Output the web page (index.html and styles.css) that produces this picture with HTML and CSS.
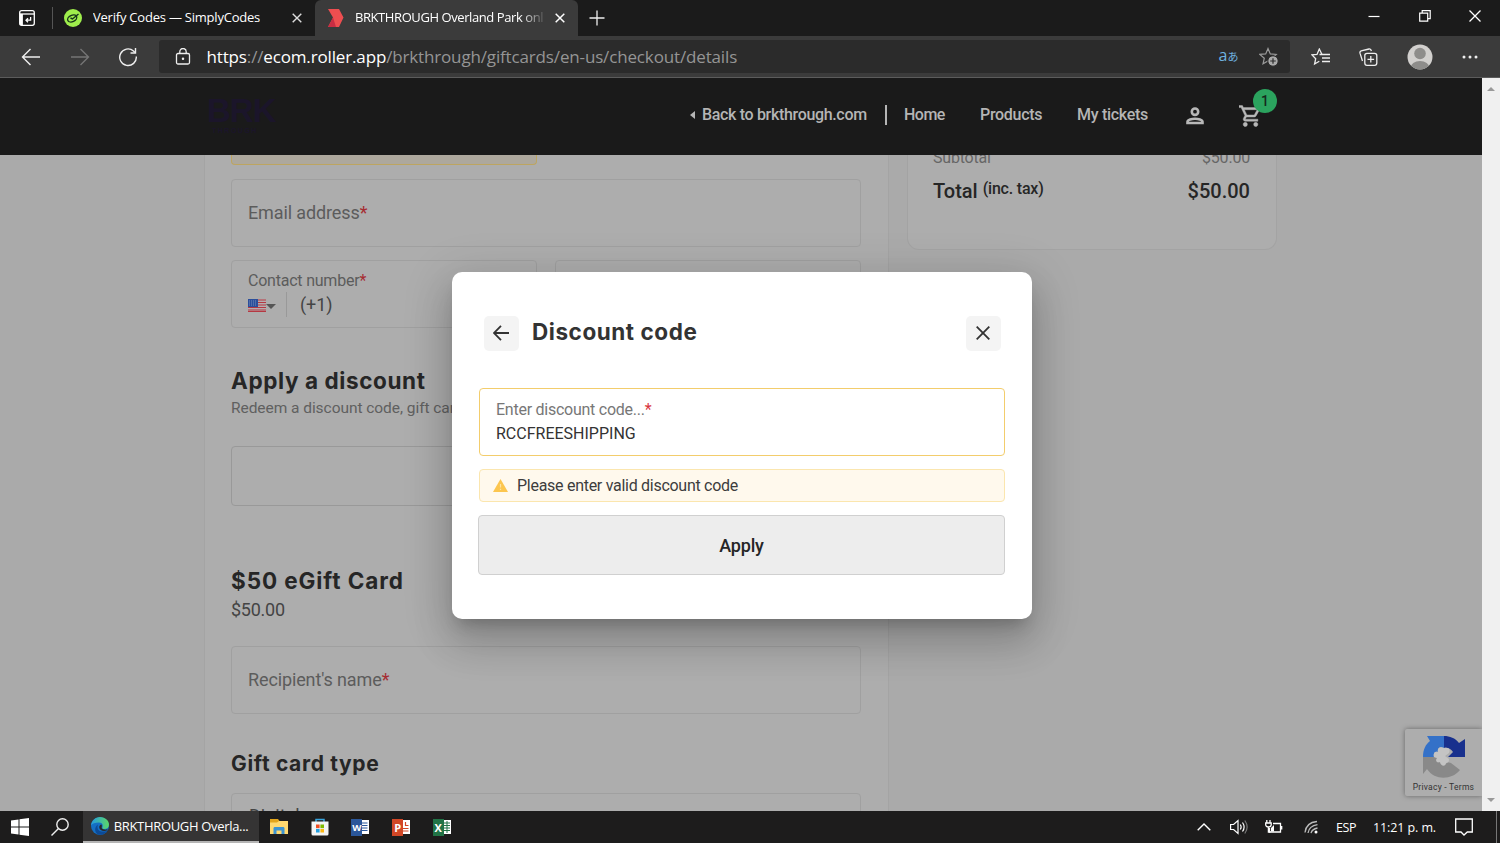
FILE: index.html
```html
<!DOCTYPE html>
<html lang="en">
<head>
    <meta charset="UTF-8">
    <meta name="viewport" content="width=device-width, initial-scale=1.0">
    <title>BRKTHROUGH Overland Park</title>
    <link rel="stylesheet" href="styles.css">
</head>
<body>
    <!-- Tabs -->
    <div class="tab-bar">
        <div class="tab-actions">
            <svg width="18" height="18" viewBox="0 0 18 18" fill="none" stroke="#fff" stroke-width="1.3"><rect x="1.7" y="1.7" width="14.6" height="14.6" rx="2"/><path d="M1.7 5h14.6"/><path d="M3.4 5v11" stroke-width="3"/><path d="M12.6 8v3.2H8m2-2-2 2 2 2"/></svg>
        </div>
        <div class="tab">
            <svg width="18" height="18" viewBox="0 0 18 18"><circle cx="9" cy="9" r="9" fill="#9fee4c"/><g fill="none" stroke="#17351a" stroke-width="1.4"><ellipse cx="8.200" cy="9.500" rx="4.800" ry="3.200" transform="rotate(-25 8 9.500)"/><path d="m6.500 9 2 1L14.500 5"/></g></svg>
            <span class="tab-title tab-simply">Verify Codes — SimplyCodes</span>
            <svg class="tab-close" width="10" height="10" viewBox="0 0 10 10"><path d="m.7.7 8.600 8.600m0-8.600L.7 9.300" stroke="#ddd" stroke-width="1.4"/></svg>
        </div>
        <div class="tab tab-active">
            <svg width="16" height="18" viewBox="0 0 16 18"><path d="M0 0h11l4.500 8.500L11 18H0l5-9.500z" fill="#ee4e50"/><path d="M5 8.500 0 18h8z" fill="#c92d43"/></svg>
            <span class="tab-title tab-brk">BRKTHROUGH Overland Park onl</span>
            <svg class="tab-close" width="10" height="10" viewBox="0 0 10 10"><path d="m.7.7 8.600 8.600m0-8.600L.7 9.300" stroke="#fff" stroke-width="1.5"/></svg>
        </div>
        <svg class="new-tab" width="16" height="16" viewBox="0 0 16 16"><path d="M8 .5v15M.5 8h15" stroke="#eee" stroke-width="1.3"/></svg>
        <div class="window-controls">
            <svg width="12" height="12" viewBox="0 0 12 12"><path d="M.5 6.500h11" stroke="#fff" stroke-width="1.200"/></svg>
            <svg width="12" height="12" viewBox="0 0 12 12" fill="none" stroke="#fff" stroke-width="1.200"><path d="M.7 3.200h8v8h-8zM3.200 3V.7h8v8H9"/></svg>
            <svg width="12" height="12" viewBox="0 0 12 12"><path d="m.5.5 11 11m0-11-11 11" stroke="#fff" stroke-width="1.300"/></svg>
        </div>
    </div>

    <!-- Address bar -->
    <div class="toolbar">
        <svg class="nav-icon" width="20" height="18" viewBox="0 0 20 18" fill="none" stroke="#eee" stroke-width="1.400"><path d="M19 9H1.500M9.500 1l-8 8 8 8"/></svg>
        <svg class="nav-icon" width="20" height="18" viewBox="0 0 20 18" fill="none" stroke="#757575" stroke-width="1.400"><path d="M1 9h17.500M10.500 1l8 8-8 8"/></svg>
        <svg class="nav-icon" width="20" height="20" viewBox="0 0 20 20" fill="none" stroke="#eee" stroke-width="1.400"><path d="M18.300 9.500A8.300 8.300 0 1 1 15.500 4l1.500 1.600"/><path d="M17.500 1v5h-5"/></svg>
        <div class="address">
            <svg width="16" height="18" viewBox="0 0 16 18" fill="none" stroke="#eee" stroke-width="1.300"><rect x="1.500" y="5.500" width="13" height="10.500" rx="1.500"/><path d="M4.800 5.500V3.700a3.200 3.200 0 0 1 6.400 0v1.800"/><circle cx="8" cy="10.800" r=".6" fill="#eee"/></svg>
            <span class="url"><b>https</b>://<b>ecom.roller.app</b>/brkthrough/giftcards/en-us/checkout/details</span>
            <span class="translate">a<small>あ</small></span>
            <svg class="add-fav" width="20" height="20" viewBox="0 0 20 20"><path d="m9 1.500 2.300 5.400 5.900.5-4.500 3.800 1.300 5.600L9 14l-5 2.800 1.300-5.600L.8 7.400l5.900-.5z" fill="none" stroke="#999" stroke-width="1.200"/><circle cx="14" cy="14" r="5.200" fill="#aaa" stroke="#2b2b2b"/><path d="M14 11.200v5.600M11.200 14h5.600" stroke="#2b2b2b" stroke-width="1.200"/></svg>
        </div>
        <div class="toolbar-right">
            <svg width="20" height="18" viewBox="0 0 20 18" fill="none" stroke="#eee" stroke-width="1.300"><path d="M11 6.500 8.300 1 6 6.400l-5 .5 3.700 3.800L3.600 16l4.700-2.800"/><path d="M8.500 6.500H19M11 10h8M11 13.500h8"/></svg>
            <svg width="19" height="18" viewBox="0 0 19 18" fill="none" stroke="#eee" stroke-width="1.300"><path d="M3.500 13 1 5.200C.7 3.900 1.200 3.200 2.200 2.900L10 1c1.200-.2 2 .2 2.400 2"/><rect x="5.800" y="5.300" width="12" height="12" rx="2.200"/><path d="M11.800 8v6.600M8.500 11.300h6.600"/></svg>
            <svg width="26" height="26" viewBox="0 0 26 26"><defs><clipPath id="face"><circle cx="13" cy="13" r="12.500"/></clipPath></defs><g clip-path="url(#face)"><path fill="#d2d0ce" d="M0 0h26v26H0z"/><circle cx="13" cy="9.500" r="5.800" fill="#8e8d8b"/><ellipse cx="13" cy="24" rx="9.500" ry="7" fill="#8e8d8b"/></g></svg>
            <svg width="16" height="4" viewBox="0 0 16 4" fill="#eee"><circle cx="2" cy="2" r="1.500"/><circle cx="8" cy="2" r="1.500"/><circle cx="14" cy="2" r="1.500"/></svg>
        </div>
    </div>

    <!-- Page -->
    <div class="viewport">
        <div class="page">
            <header class="site-header">
                <div class="logo">BRK<small>THROUGH</small></div>
                <nav>
                    <a class="back-link"><i></i>Back to brkthrough.com</a>
                    <a class="home">Home</a>
                    <a class="products">Products</a>
                    <a class="tickets">My tickets</a>
                    <svg class="person" width="18" height="18" viewBox="0 0 18 18" fill="none" stroke="#b8b8b8" stroke-width="2.600"><circle cx="9" cy="4.700" r="3.200"/><path d="M1.500 16v-1.300c0-2 4.500-3 7.500-3s7.500 1 7.500 3V16z"/></svg>
                    <div class="cart">
                        <svg width="22" height="22" viewBox="1 2 21 20" fill="#b8b8b8" stroke="#b8b8b8" stroke-width=".4"><path d="M15.550 13c.75 0 1.410-.41 1.750-1.030l3.580-6.490A.996.996 0 0 0 20.010 4H5.210l-.94-2H1v2h2l3.600 7.590-1.350 2.440C4.520 15.370 5.480 17 7 17h12v-2H7l1.100-2h7.450zM6.160 6h12.150l-2.760 5H8.530L6.160 6zM7 18c-1.100 0-1.990.9-1.990 2S5.900 22 7 22s2-.9 2-2-.9-2-2-2zm10 0c-1.100 0-1.990.9-1.990 2s.89 2 1.990 2 2-.9 2-2-.9-2-2-2z"/></svg>
                        <span class="badge">1</span>
                    </div>
                </nav>
            </header>

            <div class="content">
                <main class="details">
                    <div class="field-warning"></div>
                    <div class="field">Email address<em>*</em></div>
                    <div class="field-row">
                        <div class="field phone">
                            <div class="phone-label">Contact number<em>*</em></div>
                            <div class="phone-value">
                                <svg width="18" height="13" viewBox="0 0 18 13"><path fill="#b5aeb0" d="M0 0h18v13H0z"/><path d="M0 1h18M0 3.500h18M0 6h18M0 8.500h18M0 11h18M0 12.600h18" stroke="#b53842" stroke-width="1.100"/><path fill="#2c4f9b" d="M0 0h10v8H0z"/><path d="M1 2h8M1 4h8M1 6h8" stroke="#8b9fc2" stroke-width=".8" stroke-dasharray="1 1"/></svg>
                                <i></i>
                                <span>(+1)</span>
                            </div>
                        </div>
                        <div class="field"></div>
                    </div>
                    <h2 class="discount-title">Apply a discount</h2>
                    <p class="hint">Redeem a discount code, gift card</p>
                    <div class="discount-button"></div>
                    <h2 class="gift-title">$50 eGift Card</h2>
                    <p class="price">$50.00</p>
                    <div class="field">Recipient's name<em>*</em></div>
                    <h3>Gift card type</h3>
                    <div class="select">Digital</div>
                </main>
                <aside class="summary">
                    <div class="line"><span>Subtotal</span><span>$50.00</span></div>
                    <div class="line total"><span>Total <small>(inc. tax)</small></span><span class="amount">$50.00</span></div>
                </aside>
            </div>

            <div class="recaptcha">
                <svg width="42" height="42" viewBox="0 0 42 42"><path d="M21 0v12c-4-2-7 0-6 4-3-1-5 1-4 5H0C0 13 3 8 7 5L4 0z" fill="#3471c8"/><path d="M21 0c6 0 11 2 15 7l6-4v18H25l5-5c-2-3-5-5-9-4z" fill="#18308d"/><path d="M0 21h11l3 1c-2 4 1 5 3 4 1 5 5 5 7 0l4 1 9 7C29 44 12 45 4 33l-4 5z" fill="#898989"/><path d="M21 12c4-1 7 1 5 5l-4 3 4 3c0 3-1 4-3 4-1 4-5 3-6-1-3 1-5-1-3-4l-3-1c-1-4 1-6 4-5-1-4 2-6 6-4z" fill="#c4c4c4"/></svg>
                <span>Privacy - Terms</span>
            </div>

            <div class="modal">
                <div class="modal-header">
                    <button class="icon-button icon-back"><svg width="16" height="16" viewBox="0 0 16 16" fill="none" stroke="#333" stroke-width="1.800"><path d="M16 8H1.500M8 .8.900 8 8 15.200"/></svg></button>
                    <h1>Discount code</h1>
                    <button class="icon-button icon-close"><svg width="14" height="14" viewBox="0 0 14 14" stroke="#333" stroke-width="1.800"><path d="m.7.7 12.600 12.600m0-12.600L.7 13.300"/></svg></button>
                </div>
                <div class="code-field">
                    <label>Enter discount code...<em>*</em></label>
                    <div class="code-value">RCCFREESHIPPING</div>
                </div>
                <div class="warning">
                    <svg width="15" height="13" viewBox="0 0 15 13"><path d="M7.500 0 15 13H0z" fill="#fcc64f"/><path d="M7.500 5v3.500m0 1.200V11" stroke="#fde3a3" stroke-width="1.200"/></svg>
                    <span>Please enter valid discount code</span>
                </div>
                <button class="apply">Apply</button>
            </div>
        </div>
        <div class="scrollbar">
            <i class="up"></i>
            <i class="down"></i>
        </div>
    </div>

    <!-- Taskbar -->
    <div class="taskbar">
        <div class="task"><svg width="18" height="18" viewBox="0 0 18 18" fill="#fff"><path d="M0 2.600 7.500 1.500v7H0zM8.500 1.300 18 0v8.500H8.500zM0 9.500h7.500v7L0 15.400zM8.500 9.500H18V18l-9.500-1.300z"/></svg></div>
        <div class="task task-search"><svg width="18" height="18" viewBox="0 0 18 18" fill="none" stroke="#eee" stroke-width="1.400"><circle cx="11.500" cy="6.500" r="5.700"/><path d="M7.500 10.500.5 17.500"/></svg></div>
        <div class="task-active">
            <svg width="18" height="18" viewBox="0 0 18 18"><defs><linearGradient id="edge"><stop offset="0" stop-color="#249be0"/><stop offset="1" stop-color="#5cd865"/></linearGradient></defs><circle cx="9" cy="9" r="9" fill="#146fc4"/><path d="M0 8.500C.5 3.500 4.500 0 9 0c5.500 0 9 4 9 7.500 0 3-2 4.500-4.500 4.500-2 0-2.500-.8-2-1.800.8-1.600.2-4.700-3.500-4.700C4 5.500 1 6.500 0 8.500z" fill="url(#edge)"/><path d="M7 7.500c-2 5 2 9 9.500 6.200C14 17.500 10 18.500 7 17.500c-4-2.500-3.500-8 0-10z" fill="#0c4a97"/><path d="M10.500 7.500c1 2-.5 3 .5 4s3.500 1.800 5.500.6l-.3 1.200c-3 1.500-8 .5-8-3 0-1.500 1-2.600 2.300-2.800z" fill="#292929"/></svg>
            <span>BRKTHROUGH Overla...</span>
        </div>
        <div class="task"><svg width="18" height="16" viewBox="0 0 18 16"><path fill="#e3a51b" d="M0 0h8l1.500 2H17v12H0z"/><path fill="#ffd970" d="M0 3.500h7L9 2h9v13H0z"/><path fill="#3d94d1" d="M3.500 15V9.500C3.500 8.500 4 8 5 8h8c1 0 1.500.5 1.500 1.500V15h-3v-3.500h-5V15z"/></svg></div>
        <div class="task"><svg width="18" height="18" viewBox="0 0 18 18"><path d="M5 4V1.500h8V4" fill="none" stroke="#38a4dd" stroke-width="1.500"/><path fill="#f4f4f4" d="M.5 3.500h17V16q0 1.500-1.500 1.500H2Q.5 17.500.5 16z"/><path fill="#f04e23" d="M5 6.500h3.600v3.600H5z"/><path fill="#7fba00" d="M9.400 6.500H13v3.600H9.400z"/><path fill="#229fe0" d="M5 10.900h3.600v3.600H5z"/><path fill="#fdb813" d="M9.400 10.900H13v3.600H9.400z"/></svg></div>
        <div class="task office word"><b>W</b><svg width="7" height="14" viewBox="0 0 7 14"><path fill="#fff" d="M0 0h7v14H0z"/><path d="M0 3h5.500M0 5.500h5.500M0 8h5.500M0 10.500h5.500" stroke="#2b579a"/></svg></div>
        <div class="task office ppt"><b>P</b><svg width="7" height="14" viewBox="0 0 7 14"><path fill="#fff" d="M0 0h7v14H0z"/><path d="M0 8.500h5.500M0 11h5.500M2.500 2v3.500h3" fill="none" stroke="#d24726" stroke-width="1.200"/></svg></div>
        <div class="task office excel"><b>X</b><svg width="7" height="14" viewBox="0 0 7 14"><path fill="#fff" d="M0 0h7v14H0z"/><path d="M0 3h6M0 5.500h6M0 8h6M0 10.500h6M3 1v12" stroke="#217346"/></svg></div>
        <div class="tray">
            <svg class="chevron" width="14" height="8" viewBox="0 0 14 8" fill="none" stroke="#fff" stroke-width="1.400"><path d="m.7 7.300 6.300-6.300 6.300 6.300"/></svg>
            <svg class="speaker" width="18" height="16" viewBox="0 0 18 16" fill="none" stroke="#fff" stroke-width="1.200"><path d="M.6 5.500h3L8 1.500v13l-4.400-4h-3zM10.300 5.500q1.700 2.500 0 5M12.500 3.500q3.200 4.500 0 9"/><path d="M14.800 1.500q4.700 6.500 0 13" stroke="#777"/></svg>
            <svg class="battery" width="18" height="14" viewBox="0 0 18 14" fill="none" stroke="#fff" stroke-width="1.300"><path d="M8 3.500h7.500v8.500H4.500V8M16.700 6v3.500"/><path fill="#fff" d="M6 11.500V8l3-3v6.500z" stroke="none"/><path d="M1.800 0v3M5 0v3M.7 3h5.500v2Q6 7 3.500 7T.7 5zM3.400 7v5h2"/></svg>
            <svg class="wifi" width="16" height="14" viewBox="0 0 16 14" fill="none" stroke="#bbb" stroke-width="1.300"><path d="M1 12.500Q2 2.500 13 1.500M4 13Q5 6 13.500 4.700M7 13.200Q8 9 13.500 8"/><circle cx="12" cy="12" r="1.500" fill="#fff" stroke="none"/></svg>
            <span class="lang">ESP</span>
            <span class="clock">11:21 p. m.</span>
            <svg class="notice" width="18" height="18" viewBox="0 0 18 18" fill="none" stroke="#fff" stroke-width="1.300"><path d="M.7 1h16.600v13h-5L9 17l-3-3H.7z"/></svg>
            <i class="show-desktop"></i>
        </div>
    </div>
</body>
</html>
```
FILE: styles.css
```css
* {
    box-sizing: border-box;
}
body {
    margin: 0;
    width: 1500px;
    height: 843px;
    overflow: hidden;
    display: flex;
    flex-direction: column;
    font-family: Roboto, sans-serif;
    color: #262626;
}
svg {
    display: block;
    flex-shrink: 0;
}
h1, h2, h3, p {
    margin: 0;
}
em {
    font-style: normal;
    color: #a62c32;
}

/* browser tabs */
.tab-bar {
    display: flex;
    align-items: center;
    height: 36px;
    background: #1b1b1b;
    color: #fff;
    font-family: "Open Sans", sans-serif;
    font-size: 13px;
}
.tab-actions {
    width: 53px;
    height: 22px;
    padding: 2px 0 0 18px;
    border-right: 1px solid #555;
}
.tab {
    display: flex;
    align-items: center;
    width: 262px;
    height: 36px;
    padding: 0 13px 0 11px;
}
.tab-active {
    width: 263px;
    padding-left: 13px;
    background: #3b3b3b;
    border-radius: 6px 6px 0 0;
}
.tab-title {
    margin-left: 11px;
    padding-bottom: 2px;
    white-space: nowrap;
    overflow: hidden;
}
.tab-simply {
    letter-spacing: -0.22px;
}
.tab-brk {
    width: 190px;
    letter-spacing: -0.42px;
    -webkit-mask-image: linear-gradient(90deg, #000 165px, transparent 192px);
    mask-image: linear-gradient(90deg, #000 165px, transparent 192px);
}
.tab-close {
    margin-left: auto;
}
.new-tab {
    margin-left: 11px;
}
.window-controls {
    display: flex;
    gap: 38.500px;
    margin: -4px 19px 0 auto;
}

/* toolbar */
.toolbar {
    display: flex;
    align-items: center;
    height: 42px;
    background: #3b3b3b;
    border-bottom: 1px solid #5c5c5c;
}
.nav-icon {
    margin-left: 21px;
    margin-right: 7.500px;
}
.address {
    display: flex;
    align-items: center;
    width: 1131px;
    height: 33px;
    margin-left: 13px;
    padding: 0 11px 0 16px;
    border-radius: 3px;
    background: #2b2b2b;
    color: #959595;
    font-family: "Open Sans", sans-serif;
}
.url {
    margin-left: 16px;
    font-size: 17px;
    letter-spacing: -0.150px;
    white-space: nowrap;
}
.url b {
    color: #fff;
    font-weight: 400;
}
.translate {
    margin-left: auto;
    margin-right: 20px;
    padding-bottom: 2px;
    color: #6fb3e0;
    font-size: 16px;
    line-height: 20px;
}
.translate small {
    font-family: "Noto Sans CJK JP", sans-serif;
    font-size: 11px;
}
.toolbar-right {
    display: flex;
    align-items: center;
    flex: 1;
    justify-content: space-between;
    padding: 0 22px 0 21px;
}

/* page */
.viewport {
    display: flex;
    height: 733px;
}
.page {
    position: relative;
    width: 1482px;
    overflow: hidden;
    background: #aaa;
}
.scrollbar {
    display: flex;
    flex-direction: column;
    justify-content: space-between;
    align-items: center;
    width: 18px;
    padding: 8px 0;
    background: #f0f0f0;
}
.scrollbar i {
    border: 4px solid transparent;
}
.up {
    margin-top: -3px;
    border-bottom-color: #999 !important;
}
.down {
    margin-bottom: -3px;
    border-top-color: #999 !important;
}
.site-header {
    position: relative;
    z-index: 1;
    display: flex;
    height: 77px;
    padding-left: 207px;
    background: #1a1a1a;
    color: #b5b5b5;
}
.logo {
    width: 67px;
    padding-top: 17px;
    color: #1b152a;
    font: bold 33px/32px "Liberation Sans", sans-serif;
    letter-spacing: -1px;
}
.logo small {
    display: block;
    padding-left: 5px;
    font-size: 7px;
    line-height: 8px;
    letter-spacing: 1.500px;
}
nav {
    display: flex;
    align-items: center;
    margin-left: 416px;
    padding-bottom: 4px;
    font-size: 16px;
    font-weight: 500;
    white-space: nowrap;
}
.back-link {
    display: flex;
    align-items: center;
    width: 197px;
    height: 20px;
    border-right: 2px solid #b5b5b5;
    letter-spacing: -0.330px;
}
.back-link i {
    margin-right: 7px;
    border: 4px solid transparent;
    border-right: 5px solid #b5b5b5;
    border-left: 0;
}
.home {
    width: 76px;
    margin-left: 17px;
    letter-spacing: -0.500px;
}
.products {
    width: 97px;
    letter-spacing: -0.300px;
}
.tickets {
    width: 109px;
    letter-spacing: -0.300px;
}
.person {
    margin-top: 3px;
}
.cart {
    position: relative;
    margin-left: 35px;
    padding-top: 2px;
}
.badge {
    position: absolute;
    top: -14px;
    left: 14px;
    width: 24px;
    height: 24px;
    border-radius: 50%;
    background: #2ba35e;
    color: #15281c;
    font-size: 14px;
    line-height: 24px;
    text-align: center;
}
.content {
    display: flex;
    align-items: flex-start;
    gap: 18px;
    padding-left: 204px;
}
.details {
    width: 685px;
    height: 670px;
    padding: 0 27px 0 26px;
    background: #adadad;
    border: 1px solid #a4a4a4;
    border-top: 0;
}
.field-warning {
    width: 306px;
    height: 10px;
    margin-bottom: 14px;
    background: #ada89d;
    border: 1px solid #bda560;
    border-top: 0;
    border-radius: 0 0 4px 4px;
}
.field {
    height: 68px;
    padding-left: 16px;
    border: 1px solid #a0a0a0;
    border-radius: 4px;
    color: #5c5c5c;
    font-size: 18px;
    line-height: 66px;
    letter-spacing: -0.120px;
}
.field-row {
    display: flex;
    gap: 18px;
    margin-top: 13px;
}
.field-row .field {
    flex: 1;
}
.phone {
    line-height: 20px;
    padding-top: 10px;
}
.phone-label {
    font-size: 16px;
    letter-spacing: -0.220px;
}
.phone-value {
    display: flex;
    align-items: center;
    margin-top: 1px;
    height: 25px;
    color: #444;
}
.phone-value svg {
    margin-top: 2px;
}
.phone-value i {
    margin: 3px 10px 0 0;
    border: 5px solid transparent;
    border-top-color: #555;
    border-bottom: 0;
}
.phone-value span {
    height: 25px;
    padding-left: 13px;
    border-left: 1px solid #999;
    line-height: 25px;
}
h1, h2, h3 {
    font-family: Inter, sans-serif;
    font-weight: 700;
    white-space: nowrap;
}
h2 {
    font-size: 22.500px;
    line-height: 30px;
}
.discount-title {
    margin-top: 38px;
    letter-spacing: 0.600px;
}
.hint {
    width: 300px;
    overflow: hidden;
    white-space: nowrap;
    color: #606060;
    font-size: 15.500px;
    line-height: 25px;
    letter-spacing: -0.050px;
}
.discount-button {
    height: 60px;
    margin-top: 25px;
    border: 1px solid #999;
    border-radius: 4px;
}
.gift-title {
    margin-top: 60px;
    letter-spacing: 0.900px;
}
.price {
    margin-bottom: 22px;
    color: #444;
    font-size: 18px;
    line-height: 28px;
    letter-spacing: -0.250px;
}
h3 {
    margin: 35px 0 14px;
    font-size: 21px;
    line-height: 30px;
    letter-spacing: 0.650px;
}
.select {
    height: 60px;
    padding: 12px 17px;
    border: 1px solid #a0a0a0;
    border-radius: 4px;
    color: #444;
    font-size: 18px;
    line-height: 20px;
}
.summary {
    width: 370px;
    height: 95px;
    padding: 0 26px 0 25px;
    background: #adadad;
    border: 1px solid #a3a3a3;
    border-top: 0;
    border-radius: 0 0 12px 12px;
}
.line {
    display: flex;
    justify-content: space-between;
    height: 20px;
    margin-top: -7px;
    color: #666;
    font-size: 16px;
    line-height: 20px;
    letter-spacing: -0.200px;
}
.total {
    height: 26px;
    margin-top: 10px;
    color: #262626;
    font-size: 20px;
    font-weight: 500;
    line-height: 26px;
    letter-spacing: 0;
}
.total small {
    position: relative;
    top: -4px;
    font-size: 16px;
    letter-spacing: -0.200px;
}
.recaptcha {
    position: absolute;
    right: 0;
    bottom: 15px;
    display: flex;
    flex-direction: column;
    align-items: center;
    gap: 5px;
    width: 77px;
    height: 67px;
    padding-top: 7px;
    border-radius: 2px 0 0 2px;
    background: #adadad;
    box-shadow: 0 0 5px #666;
    color: #333;
    font-size: 8.500px;
    line-height: 9px;
    letter-spacing: 0.250px;
    white-space: nowrap;
}

/* discount dialog */
.modal {
    position: absolute;
    z-index: 2;
    top: 194px;
    left: 452px;
    width: 580px;
    height: 347px;
    padding: 44px 27px 0;
    border-radius: 10px;
    background: #fff;
    box-shadow: 0 11px 15px -7px rgba(0, 0, 0, 0.2), 0 24px 38px 3px rgba(0, 0, 0, 0.14), 0 9px 46px 8px rgba(0, 0, 0, 0.12);
}
.modal-header {
    display: flex;
    align-items: center;
    padding: 0 4px 0 5px;
}
.icon-button {
    display: flex;
    align-items: center;
    justify-content: center;
    width: 35px;
    height: 35px;
    padding: 0 2px 2px 0;
    border: 0;
    border-radius: 5px;
    background: #f4f4f4;
}
h1 {
    flex: 1;
    margin: -4px 0 0 13px;
    color: #333;
    font-size: 22.500px;
    letter-spacing: 0.550px;
}
.code-field {
    height: 68px;
    margin-top: 37px;
    padding: 11px 16px 10px;
    border: 1px solid #f3cd6c;
    border-radius: 4px;
}
.code-field label {
    display: block;
    color: #777;
    font-size: 16px;
    line-height: 20px;
    letter-spacing: -0.250px;
}
.code-field em {
    color: #d9363e;
}
.code-value {
    margin-top: 4px;
    color: #333;
    font-size: 16px;
    line-height: 20px;
}
.warning {
    display: flex;
    align-items: center;
    gap: 9px;
    height: 33px;
    margin-top: 13px;
    padding: 0 0 1px 13px;
    border: 1px solid #fbe6ae;
    border-radius: 4px;
    background: #fff9ed;
    color: #3d3d3d;
    font-size: 16px;
    letter-spacing: -0.280px;
}
.warning svg {
    margin-top: 1px;
}
.apply {
    display: block;
    width: 527px;
    height: 60px;
    margin: 13px 0 0 -1px;
    border: 1px solid #d0d0d0;
    border-radius: 4px;
    background: #ededed;
    color: #262626;
    font: 500 18px Roboto, sans-serif;
    letter-spacing: -0.200px;
}

/* taskbar */
.taskbar {
    display: flex;
    align-items: center;
    height: 32px;
    background: #1d1c1c;
    color: #fff;
    font-family: "Open Sans", sans-serif;
    font-size: 13px;
}
.task {
    display: flex;
    align-items: center;
    justify-content: center;
    width: 40.700px;
}
.task-search {
    width: 42px;
    padding-right: 3px;
}
.task-active {
    display: flex;
    align-items: center;
    width: 176px;
    height: 32px;
    padding-left: 8px;
    border-bottom: 2px solid #b5b5b5;
    background: #353434;
    letter-spacing: -0.320px;
    white-space: nowrap;
}
.task-active span {
    margin-left: 5px;
}
.office b {
    width: 11px;
    height: 17px;
    font-size: 11px;
    line-height: 17px;
    text-align: center;
}
.word b {
    background: #2b579a;
    font-size: 9.500px;
}
.ppt b {
    background: #d24726;
}
.excel b {
    background: #217346;
}
.tray {
    display: flex;
    align-items: center;
    height: 32px;
    margin-left: auto;
    font-size: 12.500px;
    white-space: nowrap;
}
.speaker {
    margin-left: 19px;
}
.battery {
    margin-left: 17px;
}
.wifi {
    margin-left: 21px;
}
.lang {
    width: 37px;
    margin-left: 16px;
    letter-spacing: -0.400px;
}
.clock {
    width: 64px;
    letter-spacing: -0.100px;
}
.notice {
    margin-left: 18px;
}
.show-desktop {
    width: 4px;
    height: 32px;
    margin-left: 23px;
    border-left: 1px solid #777;
}
```
